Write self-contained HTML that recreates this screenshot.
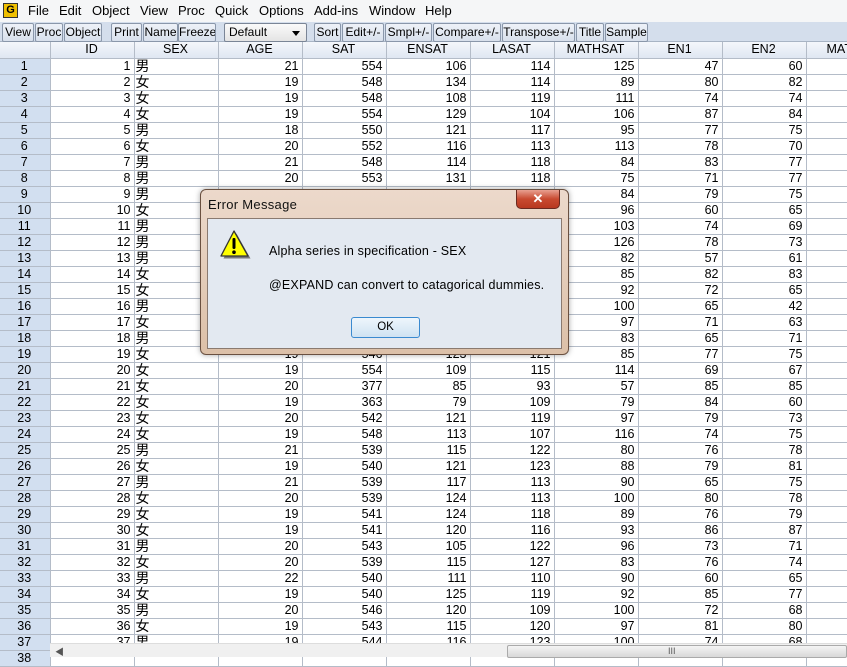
<!DOCTYPE html>
<html><head><meta charset="utf-8">
<style>
*{margin:0;padding:0;box-sizing:border-box}
body{width:847px;height:657px;overflow:hidden;background:#fff;font-family:"Liberation Sans","Noto Sans CJK SC",sans-serif;position:relative}
#menu{position:absolute;left:0;top:0;width:847px;height:22px;background:#f5f6f7;font-size:13px;color:#000}
#menu span{position:absolute;top:3px}
#gicon{position:absolute;left:3px;top:3px;width:15px;height:15px;border:1px solid #333;background:#f0c000;font-weight:bold;font-size:11px;text-align:center;line-height:13px}
#tb{position:absolute;left:0;top:22px;width:847px;height:20px;background:#d4deec;border-bottom:1px solid #a8b4c4}
.b{position:absolute;top:1px;height:19px;border:1px solid #8a97aa;border-radius:2px;background:linear-gradient(#eef2f8,#d8e0ec);font-size:12px;line-height:17px;text-align:center;color:#000;white-space:nowrap;overflow:hidden}
#dd{position:absolute;left:224px;top:1px;width:83px;height:19px;border:1px solid #7a8596;border-radius:2px;background:linear-gradient(#fafafa,#e4e4e4);font-size:12px;line-height:17px;padding-left:4px}
#dd:after{content:"";position:absolute;right:6px;top:7px;border:4px solid transparent;border-top:5px solid #000}
table{position:absolute;left:0;top:42px;border-collapse:collapse;table-layout:fixed;width:890px;font-size:12.5px}
td{height:16px;border-right:1px solid #b4bcc8;border-bottom:1px solid #b4bcc8;padding:0 3px 0 2px;text-align:right;white-space:nowrap;overflow:hidden;line-height:15px}
td:first-child{background:#d2dff0;text-align:center}
tr.h td{background:linear-gradient(#f4f7fb,#dfe7f2);text-align:center}
td.s{text-align:left;padding-left:1px;font-size:14px}
#sb{position:absolute;left:50px;top:643px;width:797px;height:14px;background:#f0f0f0;border-top:1px solid #ddd}
#thumb{position:absolute;left:457px;top:1px;width:340px;height:13px;border:1px solid #aaa;border-radius:2px;background:linear-gradient(#f4f4f4,#d8d8d8)}
#dlg{position:absolute;left:200px;top:189px;width:369px;height:166px;border:1px solid #6a5040;border-radius:6px;background:linear-gradient(#ecd9cb,#dcc0a8);box-shadow:0 0 6px rgba(0,0,0,.35)}
#dlg .t{position:absolute;left:7px;top:7px;font-size:13px;color:#111;letter-spacing:0.3px}
#x{position:absolute;left:315px;top:0;width:44px;height:19px;border:1px solid #6a2a20;border-top:none;border-radius:0 0 5px 5px;background:linear-gradient(#e8a090,#c84a30 50%,#b83820);color:#fff;text-align:center;font-weight:bold;font-size:13px;line-height:18px}
#in{position:absolute;left:6px;top:28px;width:355px;height:131px;background:#e3e9f1;border:1px solid #8a7a70}
#in .m{position:absolute;left:61px;font-size:12.5px;color:#000;letter-spacing:0.2px}
#ok{position:absolute;left:143px;top:98px;width:69px;height:21px;border:1px solid #3a8ad0;border-radius:3px;background:linear-gradient(#eef6fc,#cfe2f2);font-size:11.5px;text-align:center;line-height:19px}
</style></head><body>
<div id="menu"><div id="gicon">G</div>
<span style="left:28px">File</span><span style="left:59px">Edit</span><span style="left:92px">Object</span><span style="left:140px">View</span><span style="left:178px">Proc</span><span style="left:215px">Quick</span><span style="left:259px">Options</span><span style="left:314px">Add-ins</span><span style="left:369px">Window</span><span style="left:425px">Help</span></div>
<div id="tb">
<div class="b" style="left:2px;width:32px">View</div><div class="b" style="left:35px;width:28px">Proc</div><div class="b" style="left:64px;width:38px">Object</div>
<div class="b" style="left:111px;width:31px">Print</div><div class="b" style="left:143px;width:35px">Name</div><div class="b" style="left:178px;width:38px">Freeze</div>
<div id="dd">Default</div>
<div class="b" style="left:314px;width:27px">Sort</div><div class="b" style="left:342px;width:42px">Edit+/-</div><div class="b" style="left:385px;width:47px">Smpl+/-</div><div class="b" style="left:433px;width:68px">Compare+/-</div><div class="b" style="left:502px;width:73px">Transpose+/-</div><div class="b" style="left:576px;width:28px">Title</div><div class="b" style="left:605px;width:43px">Sample</div>
</div>
<table>
<colgroup><col style="width:50px"><col style="width:84px"><col style="width:84px"><col style="width:84px"><col style="width:84px"><col style="width:84px"><col style="width:84px"><col style="width:84px"><col style="width:84px"><col style="width:84px"><col style="width:84px"></colgroup>
<tr class="h"><td></td><td>ID</td><td>SEX</td><td>AGE</td><td>SAT</td><td>ENSAT</td><td>LASAT</td><td>MATHSAT</td><td>EN1</td><td>EN2</td><td style="text-align:left;padding-left:20px">MAT</td></tr>
<tr><td>1</td><td>1</td><td class="s">男</td><td>21</td><td>554</td><td>106</td><td>114</td><td>125</td><td>47</td><td>60</td><td></td></tr>
<tr><td>2</td><td>2</td><td class="s">女</td><td>19</td><td>548</td><td>134</td><td>114</td><td>89</td><td>80</td><td>82</td><td></td></tr>
<tr><td>3</td><td>3</td><td class="s">女</td><td>19</td><td>548</td><td>108</td><td>119</td><td>111</td><td>74</td><td>74</td><td></td></tr>
<tr><td>4</td><td>4</td><td class="s">女</td><td>19</td><td>554</td><td>129</td><td>104</td><td>106</td><td>87</td><td>84</td><td></td></tr>
<tr><td>5</td><td>5</td><td class="s">男</td><td>18</td><td>550</td><td>121</td><td>117</td><td>95</td><td>77</td><td>75</td><td></td></tr>
<tr><td>6</td><td>6</td><td class="s">女</td><td>20</td><td>552</td><td>116</td><td>113</td><td>113</td><td>78</td><td>70</td><td></td></tr>
<tr><td>7</td><td>7</td><td class="s">男</td><td>21</td><td>548</td><td>114</td><td>118</td><td>84</td><td>83</td><td>77</td><td></td></tr>
<tr><td>8</td><td>8</td><td class="s">男</td><td>20</td><td>553</td><td>131</td><td>118</td><td>75</td><td>71</td><td>77</td><td></td></tr>
<tr><td>9</td><td>9</td><td class="s">男</td><td>20</td><td>550</td><td>120</td><td>115</td><td>84</td><td>79</td><td>75</td><td></td></tr>
<tr><td>10</td><td>10</td><td class="s">女</td><td>19</td><td>548</td><td>118</td><td>117</td><td>96</td><td>60</td><td>65</td><td></td></tr>
<tr><td>11</td><td>11</td><td class="s">男</td><td>20</td><td>546</td><td>115</td><td>118</td><td>103</td><td>74</td><td>69</td><td></td></tr>
<tr><td>12</td><td>12</td><td class="s">男</td><td>21</td><td>548</td><td>117</td><td>115</td><td>126</td><td>78</td><td>73</td><td></td></tr>
<tr><td>13</td><td>13</td><td class="s">男</td><td>20</td><td>545</td><td>114</td><td>119</td><td>82</td><td>57</td><td>61</td><td></td></tr>
<tr><td>14</td><td>14</td><td class="s">女</td><td>19</td><td>547</td><td>120</td><td>116</td><td>85</td><td>82</td><td>83</td><td></td></tr>
<tr><td>15</td><td>15</td><td class="s">女</td><td>19</td><td>549</td><td>118</td><td>114</td><td>92</td><td>72</td><td>65</td><td></td></tr>
<tr><td>16</td><td>16</td><td class="s">男</td><td>20</td><td>546</td><td>116</td><td>117</td><td>100</td><td>65</td><td>42</td><td></td></tr>
<tr><td>17</td><td>17</td><td class="s">女</td><td>19</td><td>548</td><td>119</td><td>118</td><td>97</td><td>71</td><td>63</td><td></td></tr>
<tr><td>18</td><td>18</td><td class="s">男</td><td>20</td><td>547</td><td>121</td><td>115</td><td>83</td><td>65</td><td>71</td><td></td></tr>
<tr><td>19</td><td>19</td><td class="s">女</td><td>19</td><td>546</td><td>123</td><td>121</td><td>85</td><td>77</td><td>75</td><td></td></tr>
<tr><td>20</td><td>20</td><td class="s">女</td><td>19</td><td>554</td><td>109</td><td>115</td><td>114</td><td>69</td><td>67</td><td></td></tr>
<tr><td>21</td><td>21</td><td class="s">女</td><td>20</td><td>377</td><td>85</td><td>93</td><td>57</td><td>85</td><td>85</td><td></td></tr>
<tr><td>22</td><td>22</td><td class="s">女</td><td>19</td><td>363</td><td>79</td><td>109</td><td>79</td><td>84</td><td>60</td><td></td></tr>
<tr><td>23</td><td>23</td><td class="s">女</td><td>20</td><td>542</td><td>121</td><td>119</td><td>97</td><td>79</td><td>73</td><td></td></tr>
<tr><td>24</td><td>24</td><td class="s">女</td><td>19</td><td>548</td><td>113</td><td>107</td><td>116</td><td>74</td><td>75</td><td></td></tr>
<tr><td>25</td><td>25</td><td class="s">男</td><td>21</td><td>539</td><td>115</td><td>122</td><td>80</td><td>76</td><td>78</td><td></td></tr>
<tr><td>26</td><td>26</td><td class="s">女</td><td>19</td><td>540</td><td>121</td><td>123</td><td>88</td><td>79</td><td>81</td><td></td></tr>
<tr><td>27</td><td>27</td><td class="s">男</td><td>21</td><td>539</td><td>117</td><td>113</td><td>90</td><td>65</td><td>75</td><td></td></tr>
<tr><td>28</td><td>28</td><td class="s">女</td><td>20</td><td>539</td><td>124</td><td>113</td><td>100</td><td>80</td><td>78</td><td></td></tr>
<tr><td>29</td><td>29</td><td class="s">女</td><td>19</td><td>541</td><td>124</td><td>118</td><td>89</td><td>76</td><td>79</td><td></td></tr>
<tr><td>30</td><td>30</td><td class="s">女</td><td>19</td><td>541</td><td>120</td><td>116</td><td>93</td><td>86</td><td>87</td><td></td></tr>
<tr><td>31</td><td>31</td><td class="s">男</td><td>20</td><td>543</td><td>105</td><td>122</td><td>96</td><td>73</td><td>71</td><td></td></tr>
<tr><td>32</td><td>32</td><td class="s">女</td><td>20</td><td>539</td><td>115</td><td>127</td><td>83</td><td>76</td><td>74</td><td></td></tr>
<tr><td>33</td><td>33</td><td class="s">男</td><td>22</td><td>540</td><td>111</td><td>110</td><td>90</td><td>60</td><td>65</td><td></td></tr>
<tr><td>34</td><td>34</td><td class="s">女</td><td>19</td><td>540</td><td>125</td><td>119</td><td>92</td><td>85</td><td>77</td><td></td></tr>
<tr><td>35</td><td>35</td><td class="s">男</td><td>20</td><td>546</td><td>120</td><td>109</td><td>100</td><td>72</td><td>68</td><td></td></tr>
<tr><td>36</td><td>36</td><td class="s">女</td><td>19</td><td>543</td><td>115</td><td>120</td><td>97</td><td>81</td><td>80</td><td></td></tr>
<tr><td>37</td><td>37</td><td class="s">男</td><td>19</td><td>544</td><td>116</td><td>123</td><td>100</td><td>74</td><td>68</td><td></td></tr>
<tr><td>38</td><td></td><td></td><td></td><td></td><td></td><td></td><td></td><td></td><td></td><td></td></tr>
</table>
<div id="sb"><span style="position:absolute;left:5px;top:1px;font-size:9px;color:#555">&#9664;</span><div id="thumb"><span style="position:absolute;left:160px;top:0;font-size:9px;color:#555">III</span></div></div>
<div id="dlg">
<div class="t">Error Message</div>
<div id="x">✕</div>
<div id="in">
<svg style="position:absolute;left:11px;top:10px" width="32" height="32" viewBox="0 0 32 32"><path d="M16 3 L30 28 L3 28 Z" fill="#777" transform="translate(1.5,1.5)"/><path d="M15 2 L29 27 L2 27 Z" fill="#ffff00" stroke="#333" stroke-width="1.3" stroke-linejoin="round"/><rect x="13.5" y="9" width="3" height="11" rx="1.2" fill="#000"/><circle cx="15" cy="23.2" r="1.8" fill="#000"/></svg>
<div class="m" style="top:25px">Alpha series in specification - SEX</div>
<div class="m" style="top:59px">@EXPAND can convert to catagorical dummies.</div>
<div id="ok">OK</div>
</div>
</div>
</body></html>
